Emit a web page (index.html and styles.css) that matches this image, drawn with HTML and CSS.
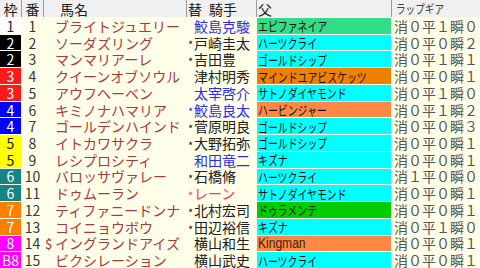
FILE: index.html
```html
<!DOCTYPE html>
<html lang="ja">
<head>
<meta charset="utf-8">
<link rel="stylesheet" href="styles.css">
</head>
<body>
<div class="table">
  <div class="head">
    <div class="h c-center">枠</div>
    <div class="h c-center">番</div>
    <div class="h h-name">馬名</div>
    <div class="h h-jockey"><span>替</span><span class="h-gap">騎手</span></div>
    <div class="h h-sire">父</div>
    <div class="h h-lap"><span class="narrow">ラップギア</span></div>
  </div>
  <div class="body">
    <div class="w f1">1</div><div class="n">1</div><div class="nm"><span class="pre"></span>ブライトジュエリー</div><div class="jk blue"><span class="star"></span>鮫島克駿</div><div class="sr s-green"><span class="narrow">エピファネイア</span></div><div class="lp">消０平１瞬０</div>
    <div class="w f2">2</div><div class="n">2</div><div class="nm"><span class="pre"></span>ソーダズリング</div><div class="jk"><span class="star">*</span>戸崎圭太</div><div class="sr s-cyan"><span class="narrow">ハーツクライ</span></div><div class="lp">消０平０瞬２</div>
    <div class="w f2">2</div><div class="n">3</div><div class="nm"><span class="pre"></span>マンマリアーレ</div><div class="jk"><span class="star">*</span>吉田豊</div><div class="sr s-cyan"><span class="narrow">ゴールドシップ</span></div><div class="lp">消０平１瞬１</div>
    <div class="w f3">3</div><div class="n">4</div><div class="nm"><span class="pre"></span>クイーンオブソウル</div><div class="jk"><span class="star"></span>津村明秀</div><div class="sr s-orange"><span class="narrow">マインドユアビスケッツ</span></div><div class="lp">消０平０瞬１</div>
    <div class="w f3">3</div><div class="n">5</div><div class="nm"><span class="pre"></span>アウフヘーベン</div><div class="jk blue"><span class="star"></span>太宰啓介</div><div class="sr s-cyan"><span class="narrow">サトノダイヤモンド</span></div><div class="lp">消０平１瞬０</div>
    <div class="w f4">4</div><div class="n">6</div><div class="nm"><span class="pre"></span>キミノナハマリア</div><div class="jk blue"><span class="star">*</span>鮫島良太</div><div class="sr s-salmon"><span class="narrow">ハービンジャー</span></div><div class="lp">消０平１瞬２</div>
    <div class="w f4">4</div><div class="n">7</div><div class="nm"><span class="pre"></span>ゴールデンハインド</div><div class="jk"><span class="star">*</span>菅原明良</div><div class="sr s-cyan"><span class="narrow">ゴールドシップ</span></div><div class="lp">消０平０瞬３</div>
    <div class="w f5">5</div><div class="n">8</div><div class="nm"><span class="pre"></span>イトカワサクラ</div><div class="jk"><span class="star">*</span>大野拓弥</div><div class="sr s-cyan"><span class="narrow">ゴールドシップ</span></div><div class="lp">消０平０瞬１</div>
    <div class="w f5">5</div><div class="n">9</div><div class="nm"><span class="pre"></span>レシプロシティ</div><div class="jk blue"><span class="star"></span>和田竜二</div><div class="sr s-cyan"><span class="narrow">キズナ</span></div><div class="lp">消０平０瞬１</div>
    <div class="w f6">6</div><div class="n">10</div><div class="nm"><span class="pre"></span>バロッサヴァレー</div><div class="jk"><span class="star">*</span>石橋脩</div><div class="sr s-cyan"><span class="narrow">ハーツクライ</span></div><div class="lp">消１平０瞬０</div>
    <div class="w f6">6</div><div class="n">11</div><div class="nm"><span class="pre"></span>ドゥムーラン</div><div class="jk red"><span class="star">*</span>レーン</div><div class="sr s-cyan"><span class="narrow">サトノダイヤモンド</span></div><div class="lp">消０平０瞬１</div>
    <div class="w f7">7</div><div class="n">12</div><div class="nm"><span class="pre"></span>ティファニードンナ</div><div class="jk"><span class="star">*</span>北村宏司</div><div class="sr s-lime"><span class="narrow">ドゥラメンテ</span></div><div class="lp">消０平０瞬１</div>
    <div class="w f7">7</div><div class="n">13</div><div class="nm"><span class="pre"></span>コイニョウボウ</div><div class="jk"><span class="star">*</span>田辺裕信</div><div class="sr s-cyan"><span class="narrow">キズナ</span></div><div class="lp">消０平１瞬０</div>
    <div class="w f8">8</div><div class="n">14</div><div class="nm"><span class="pre">$</span>イングランドアイズ</div><div class="jk"><span class="star"></span>横山和生</div><div class="sr s-salmon"><span class="latin">Kingman</span></div><div class="lp">消０平０瞬１</div>
    <div class="w f8">B8</div><div class="n">15</div><div class="nm"><span class="pre"></span>ビクシレーション</div><div class="jk"><span class="star"></span>横山武史</div><div class="sr s-cyan"><span class="narrow">ハーツクライ</span></div><div class="lp">消０平０瞬１</div>
  </div>
</div>
</body>
</html>
```
FILE: styles.css
```css
* { box-sizing: border-box; }
html, body { margin: 0; padding: 0; }
body {
  width: 480px;
  height: 268px;
  overflow: hidden;
  background: #fffee8;
  font-family: "Noto Sans CJK JP", "Noto Sans", sans-serif;
  font-size: 14px;
  line-height: 1;
}
.table {
  display: flex;
  flex-direction: column;
  height: 268px;
}
.head {
  display: grid;
  grid-template-columns: 21px 21px 142px 69px 134px 1fr;
  column-gap: 1px;
  height: 17px;
  background: #9c9c9c;
  margin-bottom: 1px;
  flex: none;
}
.h {
  background: #f0f0f0;
  color: #202020;
  display: flex;
  align-items: center;
  white-space: nowrap;
}
.c-center { justify-content: center; }
.h-name { padding-left: 16px; }
.h-jockey { padding-left: 1px; }
.h-gap { margin-left: 7px; }
.h-sire { padding-left: 1px; }
.h-lap { padding-left: 4px; color: #404040; }
.h-lap .narrow { font-size: 12px; transform: scaleX(0.8); }

.body {
  flex: 1;
  min-height: 0;
  display: grid;
  grid-template-columns: 21px 21px 142px 69px 134px 1fr;
  grid-template-rows: repeat(15, minmax(0, 1fr));
  gap: 1px;
  background: #fffee8;
}
.body > div {
  display: flex;
  align-items: center;
  white-space: nowrap;
  min-width: 0;
  min-height: 0;
}
.w { justify-content: center; color: #fff; }
.f1 { background: #ffffff; color: #202020; }
.f2 { background: #000000; }
.f3 { background: #ff1a1a; }
.f4 { background: #0000ff; }
.f5 { background: #ffff00; color: #202020; }
.f6 { background: #148484; }
.f7 { background: #ff8000; }
.f8 { background: #ff00ff; }

.n { justify-content: center; color: #383838; background: #fffee8; }
.nm { color: #a83a3a; background: #fffee8; }
.pre { display: inline-block; width: 11px; padding-left: 1px; font-size: 13px; }
.jk { color: #202020; background: #fffee8; padding-left: 1px; }
.jk.blue { color: #2b2bf0; }
.jk.red { color: #f23a5a; }
.star { display: inline-block; width: 6px; font-size: 11px; align-self: flex-end; }
.sr { padding-left: 1px; color: #101010; }
.narrow {
  display: inline-block;
  font-size: 13px;
  transform: scaleX(0.76);
  transform-origin: left center;
}
.latin {
  font-family: "Liberation Sans", sans-serif;
  font-size: 14px;
  display: inline-block;
  transform: scaleX(0.86);
  transform-origin: left center;
  color: #402010;
}
.s-green { background: #33dd88; }
.s-cyan { background: #00ffff; }
.s-orange { background: #f08000; }
.s-salmon { background: #ff8844; }
.s-lime { background: #00cc00; }
.lp { padding-left: 2px; color: #555555; background: #fffee8; }
```
